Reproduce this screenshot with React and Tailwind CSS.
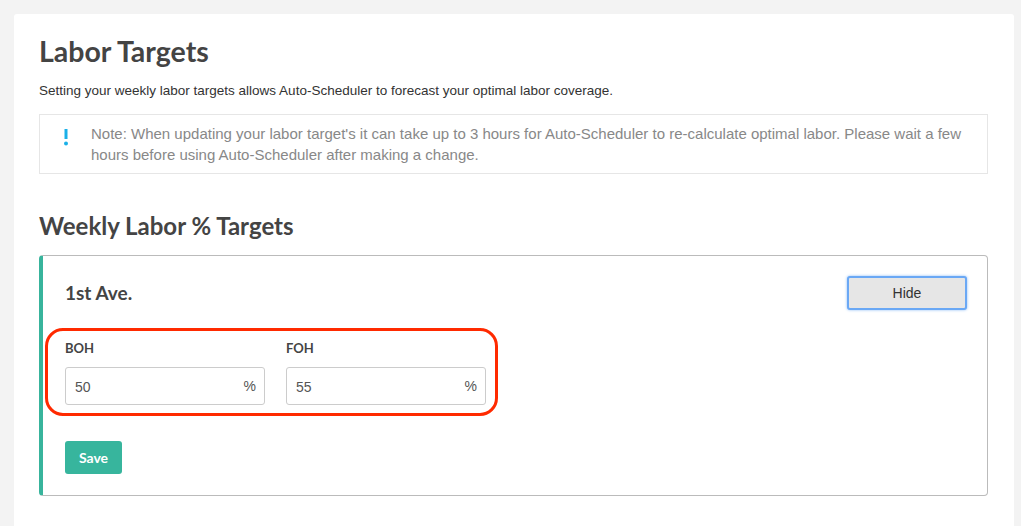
import React from "react";

function PercentInput({ label, value }) {
  return (
    <div className="w-[200px]">
      <p className="text-[13px] font-bold text-[#444] font-['Lato',sans-serif] leading-[16px]">{label}</p>
      <div className="mt-[11px] relative h-[38px] border border-[#ccc] rounded-[3px] bg-white flex items-center">
        <span className="pl-[9px] text-[14px] text-[#555] mt-[3px]">{value}</span>
        <span className="absolute right-[8px] top-[8px] text-[14px] text-[#555]">%</span>
      </div>
    </div>
  );
}

export default function App() {
  return (
    <div className="min-h-screen bg-[#f3f3f3] pt-[14px] pl-[14px] pr-[7px] font-['Liberation_Sans',Arial,sans-serif]">
      <div className="bg-white rounded-t-[3px] h-[512px] pl-[25px] pr-[26px] pt-[21px]">
        <h1 className="text-[28.5px] leading-[32px] font-bold text-[#444] font-['Lato',sans-serif]">Labor Targets</h1>
        <p className="mt-[15px] text-[13.5px] text-[#333] leading-[17px]">
          Setting your weekly labor targets allows Auto-Scheduler to forecast your optimal labor coverage.
        </p>

        {/* Note */}
        <div className="mt-[15px] border border-[#e6e6e6] flex pt-[8px] pb-[8px] pr-[10px]">
          <div className="w-[51px] flex justify-center pt-[6px]">
            <svg width="6" height="17" viewBox="0 0 6 17">
              <rect x="1.5" y="0" width="3" height="10" fill="#1ab0e8" />
              <circle cx="3" cy="14.5" r="2" fill="#1ab0e8" />
            </svg>
          </div>
          <p className="text-[15px] leading-[21px] text-[#888] flex-1">
            Note: When updating your labor target's it can take up to 3 hours for Auto-Scheduler to re-calculate optimal labor. Please wait a few hours before using Auto-Scheduler after making a change.
          </p>
        </div>

        <h2 className="mt-[38px] text-[24px] leading-[28px] font-bold text-[#444] font-['Lato',sans-serif]">Weekly Labor % Targets</h2>

        {/* Panel */}
        <div className="mt-[15px] border border-[#bbb] border-l-4 border-l-[#38b49c] rounded-[4px] h-[241px] pl-[22px] pr-[20px] pt-[20px]">
          <div className="flex items-center justify-between">
            <h3 className="text-[19px] font-bold text-[#444] font-['Lato',sans-serif]">1st Ave.</h3>
            <button className="w-[120px] h-[34px] bg-[#e6e6e6] border-2 border-[#6aa8f5] rounded-[3px] text-[14px] text-[#333] shadow-[0_0_3px_#8cbcf7]">
              Hide
            </button>
          </div>

          <div className="relative mt-[30px]">
            <div className="flex gap-[21px]">
              <PercentInput label="BOH" value="50" />
              <PercentInput label="FOH" value="55" />
            </div>
            <div className="absolute left-[-20px] top-[-12px] w-[453px] h-[88px] border-[3px] border-[#ff2a00] rounded-[18px] pointer-events-none" />
          </div>

          <button className="mt-[36px] w-[57px] h-[33px] bg-[#37b59d] rounded-[3px] text-white text-[14px] font-bold font-['Lato',sans-serif]">
            Save
          </button>
        </div>
      </div>
    </div>
  );
}
